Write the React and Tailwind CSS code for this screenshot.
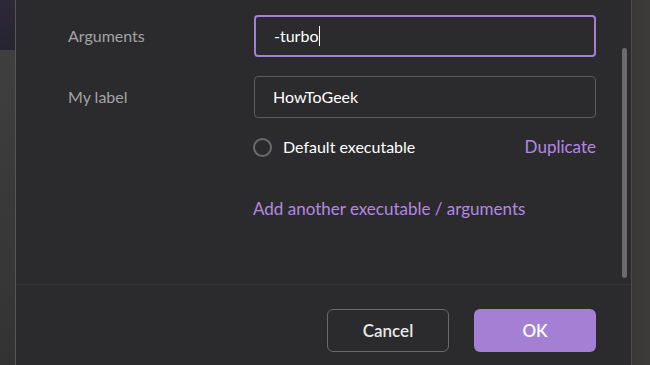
import React from 'react';

const font = { fontFamily: 'Lato, "Open Sans", sans-serif' };

const Field = ({ label, value, focused }) => (
  <div className="flex items-center">
    <div className="w-[186px] text-[16px] text-[#a3a3a3]">{label}</div>
    <div
      className={`flex h-[42px] w-[342px] items-center rounded-[4px] border px-[18px] text-[16px] text-white ${
        focused ? 'border-2 border-[#a57fd6] px-[17px]' : 'border-[#5c5c5e]'
      }`}
    >
      {value}
      {focused && <span className="ml-px h-[20px] w-px bg-white" />}
    </div>
  </div>
);

const App = () => {
  return (
    <div className="flex h-[365px] w-[650px] overflow-hidden bg-[#2b2b2d]" style={font}>
      <div className="flex w-[15px] flex-col">
        <div className="h-[50px] bg-gradient-to-b from-[#2c2838] to-[#272432]" />
        <div className="flex-1 bg-gradient-to-b from-[#3f3f3f] to-[#333333]" />
      </div>
      <div className="w-px bg-[#565656]" />
      <div className="flex flex-1 flex-col bg-[#2b2b2d]">
        <div className="flex h-[285px] border-b border-[#363638]">
          <div className="flex flex-1 flex-col pl-[52px] pt-[15px]">
            <Field label="Arguments" value="-turbo" focused />
            <div className="mt-[19px]">
              <Field label="My label" value="HowToGeek" />
            </div>
            <div className="ml-[186px] mt-[17px] flex h-[24px] w-[342px] items-center">
              <span className="-ml-[1px] h-[19px] w-[19px] rounded-full border-2 border-[#6a6a6c]" />
              <span className="ml-[11px] text-[16px] text-white">Default executable</span>
              <span className="ml-auto text-[17px] text-[#b388e4]">Duplicate</span>
            </div>
            <div className="ml-[185px] mt-[37px] text-[17px] text-[#b388e4]">
              Add another executable / arguments
            </div>
          </div>
          <div className="w-[9px] pt-[48px]">
            <div className="h-[230px] w-[5px] rounded-[3px] bg-[#6b6b6d]" />
          </div>
        </div>
        <div className="flex justify-end gap-[25px] pr-[35px] pt-[24px]">
          <button className="h-[43px] w-[122px] rounded-[6px] border border-[#6a6a6c] text-[17px] font-semibold text-[#e8e8e8]">
            Cancel
          </button>
          <button className="h-[43px] w-[122px] rounded-[6px] bg-[#a57fd4] text-[17px] font-semibold text-white">
            OK
          </button>
        </div>
      </div>
      <div className="w-px bg-[#4c4c4c]" />
      <div className="w-[18px] bg-gradient-to-r from-[#3a3836] to-[#3d3b39]" />
    </div>
  );
};

export default App;
